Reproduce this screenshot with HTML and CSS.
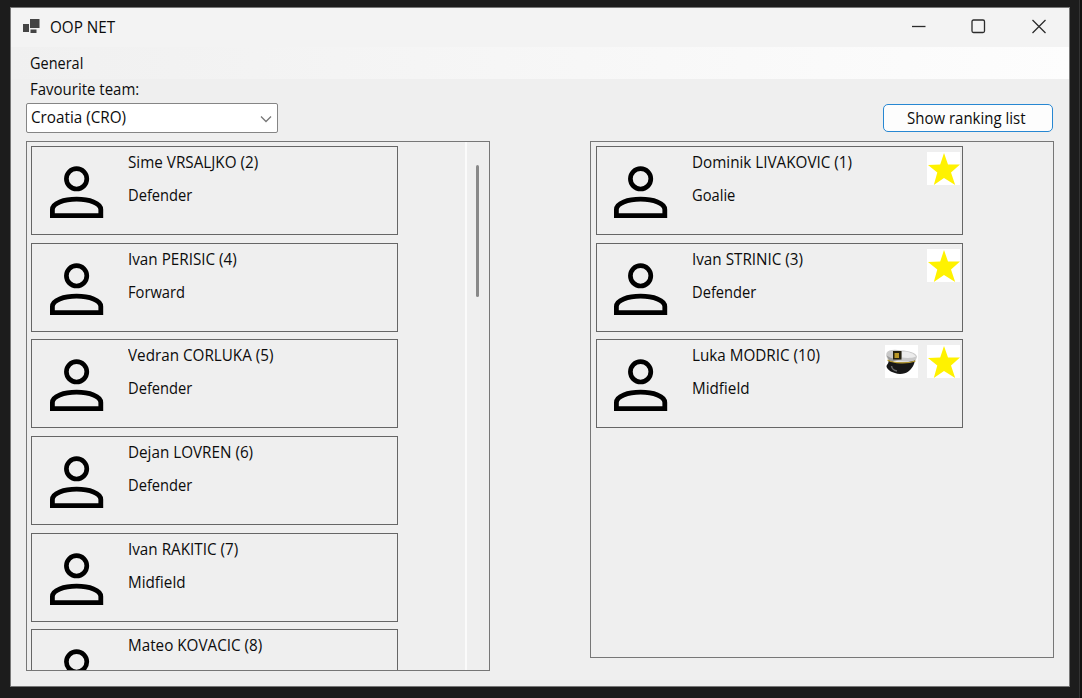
FILE: index.html
```html
<!DOCTYPE html>
<html lang="en">
<head>
<meta charset="utf-8">
<title>OOP NET</title>
<link rel="stylesheet" href="styles.css">
</head>
<body>
<svg class="defs" width="0" height="0" aria-hidden="true">
  <symbol id="person" viewBox="0 0 54 53">
    <circle cx="26.6" cy="12.8" r="10.2" fill="none" stroke="#000" stroke-width="4.7"/>
    <path d="M2.4 49.6V43.5C2.4 37 14 33.2 26.6 33.2S50.8 37 50.8 43.5V49.6Z" fill="none" stroke="#000" stroke-width="4.8"/>
  </symbol>
  <symbol id="star" viewBox="0 0 33 33">
    <path fill="#fff" d="M0 0h33v33H0z"/>
    <path fill="#fff200" d="M17 1L21 12.5H33L24 20.5L28.2 33L17 26L6.8 33L10.3 20.5L1 13L13.2 12.5Z"/>
  </symbol>
  <symbol id="cap" viewBox="0 0 33 33">
    <path fill="#fff" d="M0 0h33v33H0z"/>
    <path fill="#c9c9c9" d="M1.500 8C3 5 9 4 16 5.500C24 5.500 31 8 32 11.500C31.500 14 30.500 16 29 17L4 16C1.500 13 .8 10.500 1.500 8Z"/>
    <path fill="#ececec" d="M17 6.500C24 6.500 29 8.500 31 11.500C26 13.500 21 13 17 12.500Z"/>
    <path fill="#999" d="M1.500 10.500C5 13 8 14 17 14L5 17Z"/>
    <path fill="#171717" d="M3.500 15.500C9 18 21 18.500 30 15.500L29 19C26.500 25 22 29 15 29C8 28.500 2 25 1.500 21.500C1.500 19.500 4 18.500 3.500 15.500Z"/>
    <path fill="none" stroke="#6b6b6b" stroke-width="1.500" d="M6.500 21C7 24 9 25.500 12 26"/>
    <path fill="none" stroke="#b89a2c" stroke-width="1.300" d="M2.500 15C9 18.500 22 19 30.500 16"/>
    <path fill="#242010" d="M8 6h8.500v8.500H8z"/>
    <path fill="#b99625" d="M9.500 8h4.500v5H9.500z"/>
  </symbol>
</svg>
<div class="edge"></div>
<main class="window">
  <header class="titlebar">
    <svg class="app-icon" viewBox="0 0 17 15"><path fill="#444" d="M0 5h6v8H0zM7 0h9.500v9H7zM7.500 10.500h6V14h-6z"/></svg>
    <h1 class="title"><span class="t">OOP NET</span></h1>
    <svg class="controls" viewBox="0 0 140 20" fill="none" stroke="#2b2b2b" stroke-width="1.300">
      <path d="M2 10.500H15.500"/>
      <rect x="62" y="4" width="12.500" height="12.500" rx="1.500"/>
      <path d="M122.500 4L135.500 17M135.500 4L122.500 17"/>
    </svg>
  </header>
  <nav class="menu"><span class="t narrow">General</span></nav>
  <section class="content">
    <div class="toolbar">
      <div class="team">
        <label class="label"><span class="t medium">Favourite team:</span></label>
        <div class="select"><span class="t">Croatia (CRO)</span>
          <svg class="chevron" viewBox="0 0 12 8"><path d="M1 1.500L6 6.500L11 1.500" fill="none" stroke="#777" stroke-width="1.300"/></svg>
        </div>
      </div>
      <button class="ranking"><span class="t medium">Show ranking list</span></button>
    </div>
    <div class="panels">
      <div class="panel all">
        <div class="list">
          <article class="card"><svg class="person"><use href="#person"/></svg><div class="info"><span class="t">Sime VRSALJKO (2)</span><span class="t role">Defender</span></div></article>
          <article class="card"><svg class="person"><use href="#person"/></svg><div class="info"><span class="t">Ivan PERISIC (4)</span><span class="t role">Forward</span></div></article>
          <article class="card"><svg class="person"><use href="#person"/></svg><div class="info"><span class="t">Vedran CORLUKA (5)</span><span class="t role">Defender</span></div></article>
          <article class="card"><svg class="person"><use href="#person"/></svg><div class="info"><span class="t">Dejan LOVREN (6)</span><span class="t role">Defender</span></div></article>
          <article class="card"><svg class="person"><use href="#person"/></svg><div class="info"><span class="t">Ivan RAKITIC (7)</span><span class="t">Midfield</span></div></article>
          <article class="card"><svg class="person"><use href="#person"/></svg><div class="info"><span class="t">Mateo KOVACIC (8)</span></div></article>
        </div>
        <div class="scrollbar"><div class="thumb"></div></div>
      </div>
      <div class="panel favourites">
        <div class="list">
          <article class="card"><svg class="person"><use href="#person"/></svg><div class="info"><span class="t">Dominik LIVAKOVIC (1)</span><span class="t role">Goalie</span></div><div class="badges"><svg class="badge"><use href="#star"/></svg></div></article>
          <article class="card"><svg class="person"><use href="#person"/></svg><div class="info"><span class="t">Ivan STRINIC (3)</span><span class="t role">Defender</span></div><div class="badges"><svg class="badge"><use href="#star"/></svg></div></article>
          <article class="card"><svg class="person"><use href="#person"/></svg><div class="info"><span class="t">Luka MODRIC (10)</span><span class="t">Midfield</span></div><div class="badges"><svg class="badge"><use href="#cap"/></svg><svg class="badge"><use href="#star"/></svg></div></article>
        </div>
      </div>
    </div>
  </section>
</main>
</body>
</html>
```
FILE: styles.css
```css
* { box-sizing: border-box; }
body {
  margin: 0;
  width: 1082px;
  height: 698px;
  padding: 7px 0 0 10px;
  overflow: hidden;
  background: #1c1c1c;
  color: #0c0c0c;
  font: 15.5px/22px "Open Sans", "Noto Sans", sans-serif;
}
.defs { position: absolute; }
.edge { position: absolute; right: 0; top: 0; width: 3px; height: 698px; background: #111; border-left: 1px solid #333; }
.t { display: inline-block; white-space: nowrap; transform: scaleX(.983); transform-origin: left; }
.t.narrow { transform: scaleX(.935); }
.t.role { transform: scaleX(.948); }
.t.medium { transform: scaleX(.967); }
.window { width: 1060px; height: 680px; background: #efefef; border: 1px solid #777; }
.titlebar { display: flex; align-items: center; height: 39px; padding: 0 19px 0 12px; background: #f3f3f3; }
.app-icon { width: 17px; height: 15px; margin-top: -3px; }
.title { flex: 1; margin: -2px 0 0 10px; font-size: 15.5px; font-weight: 400; }
.controls { width: 140px; height: 20px; margin-top: -3px; }
.menu { height: 32px; padding: 5px 19px; background: linear-gradient(90deg, #f0f0f0, #fdfdfd); }
.content { padding: 0 15px; }
.toolbar { display: flex; justify-content: space-between; align-items: flex-end; height: 54px; }
.label { display: block; height: 25px; padding-left: 4px; }
.select { display: flex; justify-content: space-between; width: 252px; height: 30px; padding: 2px 5px 0 4px; background: #fff; border: 1px solid #858585; border-radius: 2px; }
.chevron { width: 12px; height: 8px; margin-top: 9px; }
.ranking { width: 170px; height: 28px; margin: 0 1px 1px 0; padding: 0 0 0 1px; font: inherit; color: inherit; background: #fdfdfd; border: 1.5px solid #2787d2; border-radius: 5px; }
.panels { display: flex; justify-content: space-between; align-items: flex-start; padding-top: 8px; }
.panel { display: flex; justify-content: space-between; width: 464px; padding: 4px; border: 1px solid #777; overflow: hidden; }
.all { height: 530px; padding: 4px 0 0 4px; }
.favourites { height: 517px; padding-left: 5px; }
.favourites .card { padding: 4px 2px 0 17px; }
.list { display: flex; flex-direction: column; gap: 7.7px; width: 367px; }
.card { display: flex; flex: none; height: 89px; border: 1px solid #666; padding: 4px 1px 0 18px; }
.person { width: 54px; height: 53px; margin-top: 15px; }
.info { display: flex; flex-direction: column; align-items: flex-start; gap: 11px; flex: 1; margin-left: 24px; }
.badges { display: flex; gap: 9px; }
.badge { width: 33px; height: 33px; margin-top: 1px; }
.scrollbar { width: 24px; height: 530px; margin-top: -4px; padding: 23px 0 0 9px; border-left: 2px solid #fbfbfb; }
.thumb { width: 3px; height: 132px; border-radius: 2px; background: #898989; }
```
